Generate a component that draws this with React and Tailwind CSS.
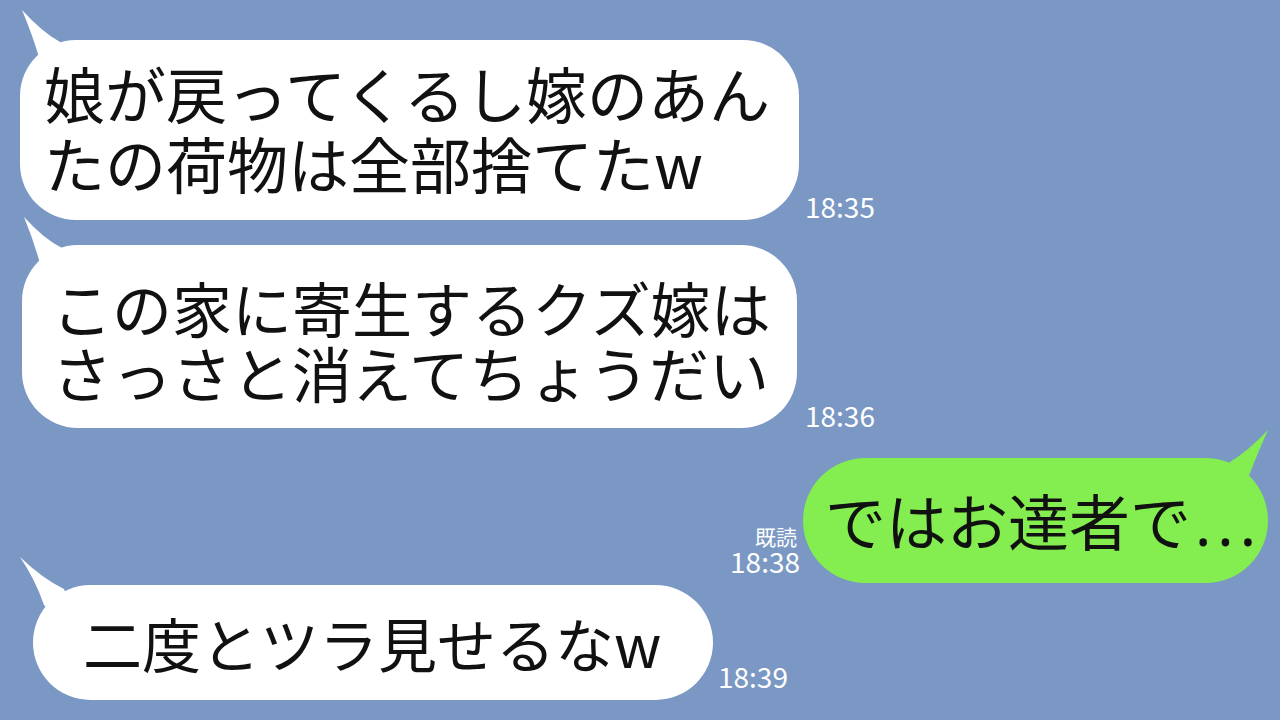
const FONT = { fontFamily: '"Noto Sans CJK JP", "Noto Sans", sans-serif' };

function Tail({ d, className }) {
  return (
    <svg
      className={`absolute left-0 top-0 overflow-visible ${className}`}
      width="1"
      height="1"
    >
      <path d={d} />
    </svg>
  );
}

function Time({ children, className = "" }) {
  return <div className={`text-[28px] leading-none text-white ${className}`}>{children}</div>;
}

export default function App() {
  return (
    <div
      className="w-[1280px] h-[720px] overflow-hidden bg-[#7a98c3] text-[#111]"
      style={FONT}
    >
      <div className="flex items-end pt-[40px] pl-[20px]">
        <div className="relative w-[779px] h-[180px] rounded-[56px] bg-white pl-[24px] pt-[18px] text-[61px] leading-[70px] whitespace-nowrap">
          <Tail className="fill-white" d="M2,-30 Q22,-8 40,2 L50,30 L25,30 L18,14 Q12,-6 2,-30 Z" />
          <span className="relative">
            娘が戻ってくるし嫁のあん
            <br />
            たの荷物は全部捨てたw
          </span>
        </div>
        <Time className="ml-[6px]">18:35</Time>
      </div>

      <div className="flex items-end mt-[25px] pl-[22px]">
        <div className="relative w-[775px] h-[183px] rounded-[56px] bg-white pl-[30px] pt-[29px] text-[60px] leading-[65px] whitespace-nowrap">
          <Tail className="fill-white" d="M2,-28 Q22,-6 40,3 L50,30 L25,30 L17,15 Q11,-6 2,-28 Z" />
          <span className="relative">
            この家に寄生するクズ嫁は
            <br />
            さっさと消えてちょうだい
          </span>
        </div>
        <Time className="ml-[8px] mb-[-1px]">18:36</Time>
      </div>

      <div className="flex items-end justify-end mt-[30px] pr-[12px]">
        <div className="flex flex-col items-end mr-[3px] mb-[8px] text-white">
          <div className="text-[21px] leading-none mr-[3px]">既読</div>
          <Time>18:38</Time>
        </div>
        <div className="relative w-[465px] h-[125px] rounded-full bg-[#84ee50] pl-[22px] flex items-center text-[61px] leading-none whitespace-nowrap">
          <Tail className="fill-[#84ee50]" d="M465,-28 Q444,-6 427,4 L415,30 L440,30 L447,15 Q455,-6 465,-28 Z" />
          <span className="relative">
            ではお達者で
            <span className="ml-[4px] tracking-[6px]" style={{ fontFamily: '"Noto Sans", sans-serif' }}>
              ...
            </span>
          </span>
        </div>
      </div>

      <div className="flex items-end mt-[2px] pl-[33px]">
        <div className="relative w-[680px] h-[115px] rounded-full bg-white pl-[50px] flex items-center text-[59px] leading-none whitespace-nowrap">
          <Tail className="fill-white" d="M-13,-28 Q10,-6 31,4 L40,30 L20,30 L11,20 Q2,-6 -13,-28 Z" />
          <span className="relative">二度とツラ見せるなw</span>
        </div>
        <Time className="ml-[5px] mb-[10px]">18:39</Time>
      </div>
    </div>
  );
}
